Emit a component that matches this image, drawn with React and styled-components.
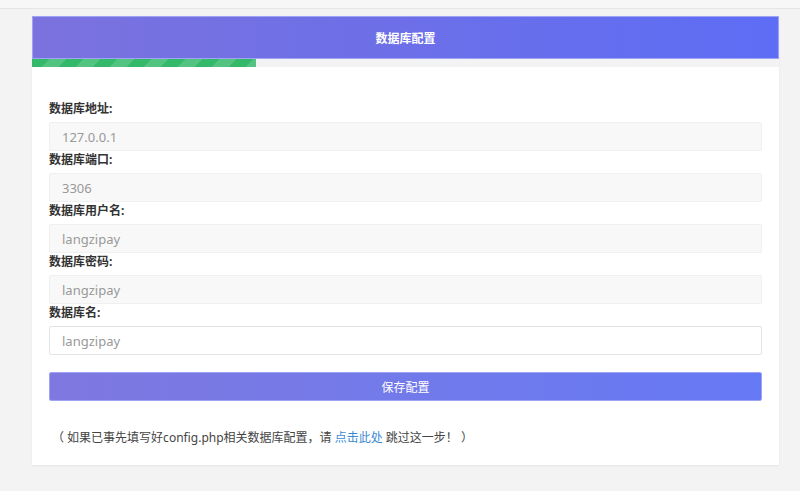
import React from "react";
import styled, { createGlobalStyle } from "styled-components";

const GlobalStyle = createGlobalStyle`
  html, body {
    margin: 0;
    padding: 0;
    background: #f3f3f3;
    font-family: "Noto Sans", "Noto Sans CJK SC", sans-serif;
  }
  * { box-sizing: border-box; }
`;

const TopStrip = styled.div`
  height: 9px;
  background: #f7f7f7;
  border-bottom: 1px solid #e6e6e6;
`;

const Page = styled.div`
  padding: 7px 21px 26px 32px;
`;

const Card = styled.div`
  background: #fff;
  box-shadow: 0 1px 2px rgba(0, 0, 0, 0.06);
`;

const Header = styled.div`
  height: 43px;
  display: flex;
  align-items: center;
  justify-content: center;
  color: #fff;
  font-size: 12px;
  font-weight: 700;
  background: linear-gradient(90deg, #7b72de 0%, #6c6fe8 50%, #5d6df5 100%);
  border: 1px solid #9ea3f5;
`;

const Track = styled.div`
  height: 8px;
  background: #f3f3f3;
`;

const Bar = styled.div`
  height: 100%;
  background-color: #34b96b;
  background-image: linear-gradient(
    -45deg,
    rgba(255, 255, 255, 0.15) 25%,
    transparent 25%,
    transparent 50%,
    rgba(255, 255, 255, 0.15) 50%,
    rgba(255, 255, 255, 0.15) 75%,
    transparent 75%,
    transparent
  );
  background-size: 34px 34px;
`;

const Body = styled.div`
  padding: 33px 17px 17px;
`;

const Field = styled.div`
  display: flex;
  flex-direction: column;
`;

const Label = styled.label`
  font-size: 12px;
  font-weight: 700;
  line-height: 18px;
  color: #333;
  margin-bottom: 4px;
`;

const Input = styled.input`
  height: 29px;
  padding: 0 12px;
  font-family: inherit;
  font-size: 13px;
  color: #999;
  background: ${(p) => (p.readOnly ? "#f8f8f8" : "#fff")};
  border: 1px solid ${(p) => (p.readOnly ? "#f0f0f0" : "#e3e3e3")};
  border-radius: 2px;
  outline: none;
`;

const SaveButton = styled.button`
  display: block;
  width: 100%;
  height: 29px;
  margin-top: 17px;
  border: 1px solid #9ea3f5;
  border-radius: 2px;
  color: #fff;
  font-family: inherit;
  font-size: 12px;
  background: linear-gradient(90deg, #7f78e0 0%, #727aea 50%, #6679f5 100%);
  cursor: pointer;
`;

const Note = styled.p`
  margin: 27px 0 0 3px;
  font-size: 12px;
  line-height: 20px;
  color: #444;
`;

const Link = styled.a`
  color: #3b8ad6;
  text-decoration: none;
`;

const fields = [
  { label: "数据库地址:", value: "127.0.0.1", readOnly: true },
  { label: "数据库端口:", value: "3306", readOnly: true },
  { label: "数据库用户名:", value: "langzipay", readOnly: true },
  { label: "数据库密码:", value: "langzipay", readOnly: true },
  { label: "数据库名:", value: "langzipay", readOnly: false },
];

export default function App() {
  return (
    <>
      <GlobalStyle />
      <TopStrip />
      <Page>
        <Card>
          <Header>数据库配置</Header>
          <Track>
            <Bar style={{ width: "30%" }} />
          </Track>
          <Body>
            {fields.map((f) => (
              <Field key={f.label}>
                <Label>{f.label}</Label>
                <Input defaultValue={f.value} readOnly={f.readOnly} />
              </Field>
            ))}
            <SaveButton>保存配置</SaveButton>
            <Note>
              （ 如果已事先填写好config.php相关数据库配置，请 <Link href="#">点击此处</Link> 跳过这一步！ ）
            </Note>
          </Body>
        </Card>
      </Page>
    </>
  );
}
